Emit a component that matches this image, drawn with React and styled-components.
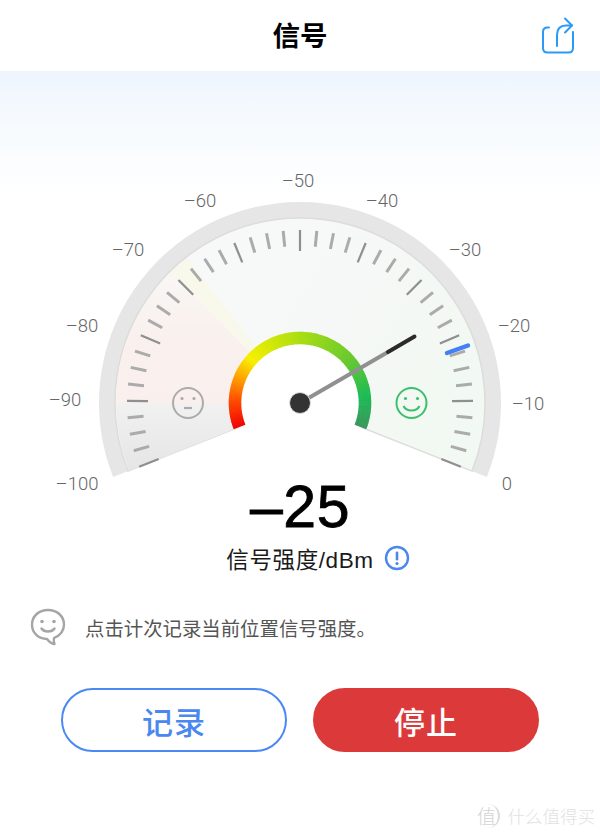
import React from 'react'
import styled, { createGlobalStyle } from 'styled-components'

const CJK = '"Liberation Sans", "Noto Sans CJK SC", sans-serif'

const GlobalStyle = createGlobalStyle`
    html, body {
        margin: 0;
        padding: 0;
        background: #fff;
        font-family: ${CJK};
    }
`

const Page = styled.div`
    position: relative;
    width: 600px;
    height: 832px;
    overflow: hidden;
    background: #fff;
`

const Header = styled.header`
    display: grid;
    grid-template-columns: 1fr auto 1fr;
    align-items: center;
    height: 71px;
    padding: 0 25px 0 0;
    box-sizing: border-box;
    background: #fff;
`

const Title = styled.h1`
    grid-column: 2;
    margin: 0 0 4px 25px;
    font-size: 27.5px;
    font-weight: 700;
    color: #000;
`

const ShareButton = styled.div`
    justify-self: end;
    display: flex;
`

const Sky = styled.section`
    background: linear-gradient(#eef5fd 0, #f6fafe 50px, #ffffff 125px);
    padding-bottom: 1px;
`

const GaugeSvg = styled.svg`
    display: block;
    overflow: visible;
`

const TickLabel = styled.text`
    font-family: Roboto, "Liberation Sans", sans-serif;
    font-weight: 300;
    font-size: 18.5px;
    fill: #666;
    text-anchor: middle;
    dominant-baseline: central;
`

const Reading = styled.div`
    height: 58px;
    line-height: 60px;
    text-align: center;
    font-family: "Liberation Sans", sans-serif;
    font-size: 59px;
    letter-spacing: 0.5px;
    color: #000;
    -webkit-text-stroke: 0.8px #000;
`

const UnitRow = styled.div`
    display: grid;
    grid-template-columns: 1fr auto 1fr;
    align-items: center;
    margin-top: 7px;
    height: 32px;
`

const UnitText = styled.span`
    grid-column: 2;
    font-size: 22.5px;
    letter-spacing: 0.6px;
    color: #1a1a1a;
`

const InfoBadge = styled.svg`
    margin-left: 10px;
    display: block;
`

const Hint = styled.div`
    display: flex;
    align-items: center;
    gap: 19px;
    margin-top: 33px;
    padding-left: 30px;
    height: 40px;
`

const HintText = styled.span`
    font-size: 19.4px;
    color: #555;
`

const Actions = styled.div`
    display: flex;
    justify-content: center;
    gap: 26px;
    margin-top: 41px;
`

const ActionButton = styled.button`
    width: 226px;
    height: 64px;
    box-sizing: border-box;
    border-radius: 32px;
    border: 2px solid ${p => (p.$primary ? '#dc3a3a' : '#4a88f5')};
    background: ${p => (p.$primary ? '#dc3a3a' : '#fff')};
    color: ${p => (p.$primary ? '#fff' : '#4a88f0')};
    font-family: ${CJK};
    font-size: 31px;
    font-weight: 500;
    letter-spacing: 1px;
    padding: 0;
`

const Watermark = styled.div`
    position: absolute;
    right: 5px;
    bottom: 4px;
    display: flex;
    align-items: center;
    gap: 8px;
    color: #e2e2e2;
    font-size: 17.5px;
    font-weight: 300;
    font-family: ${CJK};
`

const WatermarkLogo = styled.span`
    display: flex;
    align-items: center;
    justify-content: center;
    width: 22px;
    height: 24px;
    border-right: 2px solid #dcdcdc;
    border-radius: 50%;
    color: #d4d4d4;
    font-size: 19px;
`

// gauge geometry, in page coordinates
const CX = 300
const CY = 403
const OFFSET = 21.6 // degrees the scale drops below horizontal on each side
const SWEEP = 180 + OFFSET * 2

const polar = (deg, r) => {
    // deg is measured clockwise from the left horizontal
    const a = (deg * Math.PI) / 180
    return [CX - r * Math.cos(a), CY - r * Math.sin(a)]
}

const fmt = ([x, y]) => `${x.toFixed(2)} ${y.toFixed(2)}`

const wedge = (from, to, r) =>
    `M${CX} ${CY} L${fmt(polar(from, r))} A${r} ${r} 0 ${to - from > 180 ? 1 : 0} 1 ${fmt(polar(to, r))} Z`

const hexToRgb = h => [1, 3, 5].map(i => parseInt(h.slice(i, i + 2), 16))

const RING_STOPS = [
    [0, '#f20505'],
    [0.1, '#ff4a00'],
    [0.19, '#ff9c00'],
    [0.28, '#f6f000'],
    [0.4, '#cbe60a'],
    [0.52, '#a3dc14'],
    [0.72, '#68c92e'],
    [0.88, '#1cbb56'],
    [1, '#3b985c'],
]

const ringColor = t => {
    let i = 0
    while (i < RING_STOPS.length - 2 && t > RING_STOPS[i + 1][0]) i++
    const [t0, c0] = RING_STOPS[i]
    const [t1, c1] = RING_STOPS[i + 1]
    const k = (t - t0) / (t1 - t0)
    const a = hexToRgb(c0)
    const b = hexToRgb(c1)
    return `rgb(${a.map((v, j) => Math.round(v + (b[j] - v) * k)).join(',')})`
}

const Ticks = () => {
    const ticks = []
    for (let i = 0; i <= 40; i++) {
        const deg = -OFFSET + (SWEEP * i) / 40
        const major = i % 4 === 0
        const p1 = polar(deg, 173)
        const p2 = polar(deg, major ? 152 : 157)
        ticks.push(
            <line
                key={i}
                x1={p1[0]} y1={p1[1]} x2={p2[0]} y2={p2[1]}
                stroke={major ? '#8f8f8f' : '#ababab'}
                strokeWidth={major ? 2.2 : 3}
            />
        )
    }
    return <g>{ticks}</g>
}

const Ring = () => {
    const segs = []
    const n = 120
    for (let i = 0; i < n; i++) {
        const a = -OFFSET + (SWEEP * i) / n
        const b = -OFFSET + (SWEEP * (i + 1.3)) / n
        segs.push(
            <path
                key={i}
                d={`M${fmt(polar(a, 65))} A65 65 0 0 1 ${fmt(polar(Math.min(b, 180 + OFFSET), 65))}`}
                stroke={ringColor(i / (n - 1))}
                strokeWidth="12.5"
                fill="none"
            />
        )
    }
    return <g>{segs}</g>
}

const LABELS = [
    ['–50', 298, 181], ['–60', 200, 201], ['–40', 382, 201], ['–70', 128, 250], ['–30', 465, 250],
    ['–80', 82, 326], ['–20', 514, 326], ['–90', 65, 400], ['–10', 528, 404], ['–100', 77, 484], ['0', 507, 484],
]

const Face = ({ x, color, happy }) => (
    <g stroke={color} fill="none" strokeWidth="2">
        <circle cx={x} cy={403} r="15" />
        <circle cx={x - 6} cy={398.5} r="1.6" fill={color} stroke="none" />
        <circle cx={x + 6} cy={398.5} r="1.6" fill={color} stroke="none" />
        {happy
            ? <path d={`M${x - 8} 406 C${x - 5} 412 ${x + 5} 412 ${x + 8} 406`} strokeWidth="2.2" />
            : <path d={`M${x - 4} 408 H${x + 4}`} strokeWidth="2.2" />}
    </g>
)

const Gauge = () => (
    <GaugeSvg width="600" height="405" viewBox="0 71 600 405">
        <defs>
            <linearGradient id="faceBase" x1="0" y1="0" x2="1" y2="0.4">
                <stop offset="0" stopColor="#f8f8f8" />
                <stop offset="0.5" stopColor="#f7f8f8" />
                <stop offset="1" stopColor="#f2f8f2" />
            </linearGradient>
            <linearGradient id="faceLow" x1="0" y1="403" x2="0" y2="478" gradientUnits="userSpaceOnUse">
                <stop offset="0" stopColor="#f1f1f1" />
                <stop offset="1" stopColor="#e4e4e4" />
            </linearGradient>
            <linearGradient id="faceRed" x1="0" y1="403" x2="0" y2="270" gradientUnits="userSpaceOnUse">
                <stop offset="0" stopColor="#faefec" />
                <stop offset="0.55" stopColor="#f9f1ee" />
                <stop offset="1" stopColor="#f9f7f5" />
            </linearGradient>
            <linearGradient id="faceYellow" x1="0" y1="1" x2="1" y2="0">
                <stop offset="0" stopColor="#f8f8f0" />
                <stop offset="1" stopColor="#f7f8e6" />
            </linearGradient>
        </defs>

        <path d={wedge(-OFFSET, 180 + OFFSET, 201)} fill="#e6e6e6" />
        <path d={wedge(-OFFSET, 180 + OFFSET, 185)} fill="url(#faceBase)" stroke="#dcdcdc" strokeWidth="1.5" />
        <path d={wedge(-OFFSET, 0, 184)} fill="url(#faceLow)" />
        <path d={wedge(0, 45.5, 184)} fill="url(#faceRed)" />
        <path d={wedge(45.5, 52, 184)} fill="url(#faceYellow)" />

        <Ticks />
        <Face x={188} color="#ababab" />
        <Face x={411.5} color="#3cbf6e" happy />

        <circle cx={CX} cy={CY} r="60" fill="#fff" />
        <path d={`M${CX} ${CY} L${fmt(polar(-OFFSET, 66))} A66 66 0 0 0 ${fmt(polar(180 + OFFSET, 66))} Z`} fill="#fff" />
        <Ring />

        {/* reference mark for the strongest reading */}
        <line x1="447" y1="353" x2="468" y2="345.5" stroke="#437ff5" strokeWidth="4.4" strokeLinecap="round" />

        <line x1={CX} y1={CY} x2="388" y2="352" stroke="#909090" strokeWidth="4" />
        <line x1="388" y1="352" x2="414.5" y2="336.5" stroke="#2b2b2b" strokeWidth="4" strokeLinecap="round" />
        <circle cx={CX} cy={CY} r="10.5" fill="#333" stroke="#e2e2e2" strokeWidth="1" />

        {LABELS.map(([t, x, y]) => (
            <TickLabel key={t} x={x} y={y}>{t}</TickLabel>
        ))}
    </GaugeSvg>
)

const ShareIcon = () => (
    <svg width="34" height="40" viewBox="0 0 34 40" fill="none" stroke="#2a9af8" strokeWidth="2" strokeLinecap="round" strokeLinejoin="round">
        <path d="M8 11.5 H6.5 C3.5 11.5 2 13 2 16 V32 C2 35 3.5 36.5 6.5 36.5 H27.5 C30.5 36.5 32 35 32 32 V16" />
        <path d="M16 30 V19 C16 12 19 9.5 25 9.5 H31" />
        <path d="M24 2.5 L31 9.5 L24 16.5" />
    </svg>
)

const ChatIcon = () => (
    <svg width="36" height="38" viewBox="0 0 36 38" fill="none" stroke="#a5a5a5" strokeWidth="2.4" strokeLinecap="round" strokeLinejoin="round">
        <path d="M18 2 C8.5 2 2 8.5 2 16.5 C2 25 8.5 31 17 31 C18.5 33 21 35.5 24.5 36 C23.5 34 23.5 32.5 24 30 C30 27.5 34 22.5 34 16.5 C34 8.5 27.5 2 18 2 Z" />
        <circle cx="12" cy="13.5" r="1.8" fill="#a5a5a5" stroke="none" />
        <circle cx="24" cy="13.5" r="1.8" fill="#a5a5a5" stroke="none" />
        <path d="M11.5 20.5 C14 24.5 22 24.5 24.5 20.5" />
    </svg>
)

const InfoIcon = () => (
    <InfoBadge width="26" height="26" viewBox="0 0 26 26">
        <circle cx="13" cy="13" r="11" fill="none" stroke="#4a88f0" strokeWidth="2.4" />
        <rect x="11.7" y="6.5" width="2.6" height="9" rx="1.2" fill="#4a88f0" />
        <circle cx="13" cy="18.5" r="1.6" fill="#4a88f0" />
    </InfoBadge>
)

export default function App() {
    return (
        <Page>
            <GlobalStyle />
            <Header>
                <Title>信号</Title>
                <ShareButton><ShareIcon /></ShareButton>
            </Header>
            <Sky>
                <Gauge />
            </Sky>
            <Reading>–25</Reading>
            <UnitRow>
                <UnitText>信号强度/dBm</UnitText>
                <InfoIcon />
            </UnitRow>
            <Hint>
                <ChatIcon />
                <HintText>点击计次记录当前位置信号强度。</HintText>
            </Hint>
            <Actions>
                <ActionButton>记录</ActionButton>
                <ActionButton $primary>停止</ActionButton>
            </Actions>
            <Watermark>
                <WatermarkLogo>值</WatermarkLogo>
                什么值得买
            </Watermark>
        </Page>
    )
}
